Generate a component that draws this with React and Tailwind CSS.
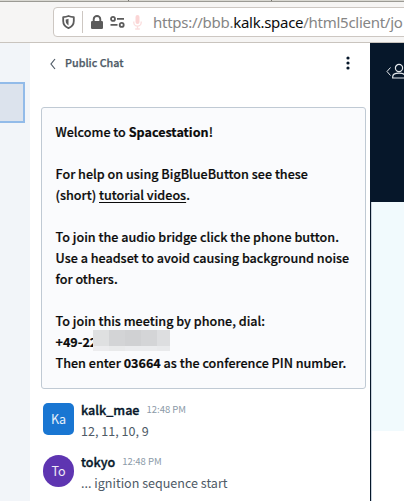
const chatFont = "font-['Noto_Sans_CJK_SC','Noto_Sans',sans-serif]";

function BrowserBar() {
  return (
    <header className="flex h-[43px] w-[424px] shrink-0 flex-col border-b border-[#c9c4be] bg-[#f6f5f4]">
      <div className="flex h-[2px] shrink-0 border-b border-[#9b9a94] bg-[#d9d8d2]">
        <div className="w-[129px] border-r border-[#77766f]" />
        <div className="w-[143px] border-r border-[#77766f]" />
      </div>
      <div className="mt-[5px] ml-[53px] flex h-[30px] items-center rounded-[4px] border border-[#cdc7c2] bg-white pl-2">
        <svg width="13" height="14" viewBox="0 0 13 14" className="shrink-0">
          <path d="M6.5 1C4.8 1.8 3 2.1 1.2 2.2V6c0 3.300 2 5.800 5.300 7.100C9.800 11.800 11.800 9.300 11.800 6V2.200C10 2.100 8.200 1.800 6.500 1Z" fill="none" stroke="#5b5b5b" strokeWidth="1.8" strokeLinejoin="round" />
          <path d="M6.500 3.700v6.700C4.800 9.500 3.700 8 3.700 6V4.400c1-.1 2-.3 2.800-.7Z" fill="#5b5b5b" />
        </svg>
        <div className="ml-[7px] h-[22px] w-px shrink-0 bg-[#cdc7c2]" />
        <svg width="12" height="14" viewBox="0 0 12 14" className="ml-[8px] shrink-0">
          <rect x="0" y="6" width="12" height="8" rx="1.300" fill="#5b5b5b" />
          <path d="M2.700 7V4.300a3.300 3.300 0 0 1 6.600 0V7" fill="none" stroke="#5b5b5b" strokeWidth="1.900" />
        </svg>
        <svg width="15" height="12" viewBox="0 0 15 12" className="ml-[7px] shrink-0" fill="none" stroke="#5b5b5b" strokeWidth="1.800">
          <circle cx="3" cy="2.900" r="2" />
          <path d="M7 2.900h7M.500 8.900h7" />
          <circle cx="11.700" cy="8.900" r="2" />
        </svg>
        <svg width="9" height="15" viewBox="0 0 9 15" className="ml-[8px] shrink-0">
          <rect x="2.500" y="0" width="4" height="9" rx="2" fill="#fbd5d5" />
          <path d="M.800 6.500v1a3.700 3.700 0 0 0 7.400 0v-1M4.500 11v3M2.200 14h4.600" fill="none" stroke="#fbdede" strokeWidth="1.300" />
        </svg>
        <div className="ml-[11px] shrink-0 whitespace-nowrap font-['Noto_Sans',sans-serif] text-[15px] leading-5 tracking-[-0.270px] text-[#858585]">
          https://bbb.<span className="text-[#0c0c0c]">kalk.space</span>/html5client/jo
        </div>
      </div>
    </header>
  );
}

function Line({ children = "\u00a0", className = "" }) {
  return (
    <p className="h-[21px] whitespace-nowrap">
      <span className={className}>{children}</span>
    </p>
  );
}

function Redaction() {
  return (
    <div className="absolute top-[-1px] left-[37.500px] w-[77px]">
      <div className="flex h-4">
        <i className="w-4 bg-[#dfe0e1]" />
        <i className="w-4 bg-[#d3d4d6]" />
        <i className="w-4 bg-[#d0d1d3]" />
        <i className="w-4 bg-[#d4d5d7]" />
        <i className="w-[13px] bg-[#dddee0]" />
      </div>
      <div className="flex h-[5px]">
        <i className="w-4 bg-[#ececee]" />
        <i className="w-4 bg-[#e9eaeb]" />
        <i className="w-8 bg-[#ebecee]" />
        <i className="w-[13px] bg-[#e9eaec]" />
      </div>
    </div>
  );
}

function WelcomeBox() {
  return (
    <section className="mt-6 ml-[11px] h-[282px] w-[325px] rounded-[3px] border border-[#c0cad4] bg-[#fafbfd] pt-[13px] pl-[13.500px] text-[12.580px] leading-[21px] font-medium text-[#0b0b0b] [-webkit-text-stroke:0.200px_#0b0b0b]">
      <Line>Welcome to <b>Spacestation</b>!</Line>
      <Line />
      <Line>For help on using BigBlueButton see these</Line>
      <Line>(short) <u className="underline-offset-2">tutorial videos</u>.</Line>
      <Line />
      <Line>To join the audio bridge click the phone button.</Line>
      <Line>Use a headset to avoid causing background noise</Line>
      <Line>for others.</Line>
      <Line />
      <Line>To join this meeting by phone, dial:</Line>
      <div className="relative">
        <Line className="font-bold">+49-22</Line>
        <Redaction />
      </div>
      <Line>Then enter <b>03664</b> as the conference PIN number.</Line>
    </section>
  );
}

function Message({ initials, name, text, avatar, className }) {
  return (
    <article className={`ml-[13px] flex h-8 gap-[7px] ${className}`}>
      <div className={`flex h-8 w-[31px] shrink-0 items-center justify-center text-[12.560px] text-white/90 ${avatar}`}>{initials}</div>
      <div className="-mt-1 whitespace-nowrap">
        <div className="flex h-[21px] items-center gap-[7px] leading-[21px]">
          <span className="text-[12.560px] font-medium text-[#06172a] [-webkit-text-stroke:0.350px_#06172a]">{name}</span>
          <time className="text-[9.500px] text-[#8b9aa8]">12:48 PM</time>
        </div>
        <p className="h-[21px] text-[12.560px] leading-[21px] text-[#4e5a66]">{text}</p>
      </div>
    </article>
  );
}

function ChatPanel() {
  return (
    <main className={`w-[340px] shrink-0 bg-white ${chatFont}`}>
      <div className="flex h-10 items-center pl-[19px]">
        <svg width="8" height="12" viewBox="0 0 8 12" fill="none" stroke="#4e5a66" strokeWidth="1.200" className="mt-px">
          <path d="M6 1 2 6l4 5" />
        </svg>
        <h1 className="ml-2 text-[10.750px] font-medium text-[#4e5a66] [-webkit-text-stroke:0.250px_#4e5a66]">Public Chat</h1>
        <svg width="4" height="14" viewBox="0 0 4 14" fill="#06172a" className="mr-[20.500px] ml-auto -mt-px">
          <circle cx="2" cy="2" r="1.600" />
          <circle cx="2" cy="7" r="1.600" />
          <circle cx="2" cy="12" r="1.600" />
        </svg>
      </div>
      <WelcomeBox />
      <Message className="mt-[14px]" initials="Ka" name="kalk_mae" text="12, 11, 10, 9" avatar="rounded-[5px] bg-[#1976d2]" />
      <Message className="mt-[20px]" initials="To" name="tokyo" text="... ignition sequence start" avatar="rounded-full bg-[#5e35b1]" />
    </main>
  );
}

export default function App() {
  return (
    <div className="flex h-[501px] w-[404px] flex-col overflow-hidden">
      <BrowserBar />
      <div className="flex min-h-0 flex-1">
        <aside className="w-[30px] shrink-0 bg-[#f2f5f9] pt-[39px]">
          <div className="h-[41px] w-[25px] border-2 border-l-0 border-[#92bbe9] bg-[#dce3ed]" />
        </aside>
        <ChatPanel />
        <aside className="flex w-[34px] shrink-0 flex-col border-l border-[#06172a] bg-white">
          <div className="h-[159px] shrink-0 overflow-hidden bg-[#06172a] pt-[20px] pl-[15px]">
            <svg width="24" height="17" viewBox="0 0 24 17" fill="none" stroke="#e5e9ed" strokeWidth="1.200">
              <path d="M4.500 4.500 1 8.500l3.500 4" strokeWidth="1" />
              <circle cx="13" cy="5" r="3.600" />
              <path d="M6.700 15v-1.200c0-2.400 2.500-3.600 6.300-3.600s6.300 1.200 6.300 3.600V15Z" />
            </svg>
          </div>
          <div className="h-[229px] shrink-0 border-l border-[#c9d2dc] bg-[#f1fafd]" />
          <div className="flex-1 border-l border-[#c9d2dc]" />
        </aside>
      </div>
    </div>
  );
}
